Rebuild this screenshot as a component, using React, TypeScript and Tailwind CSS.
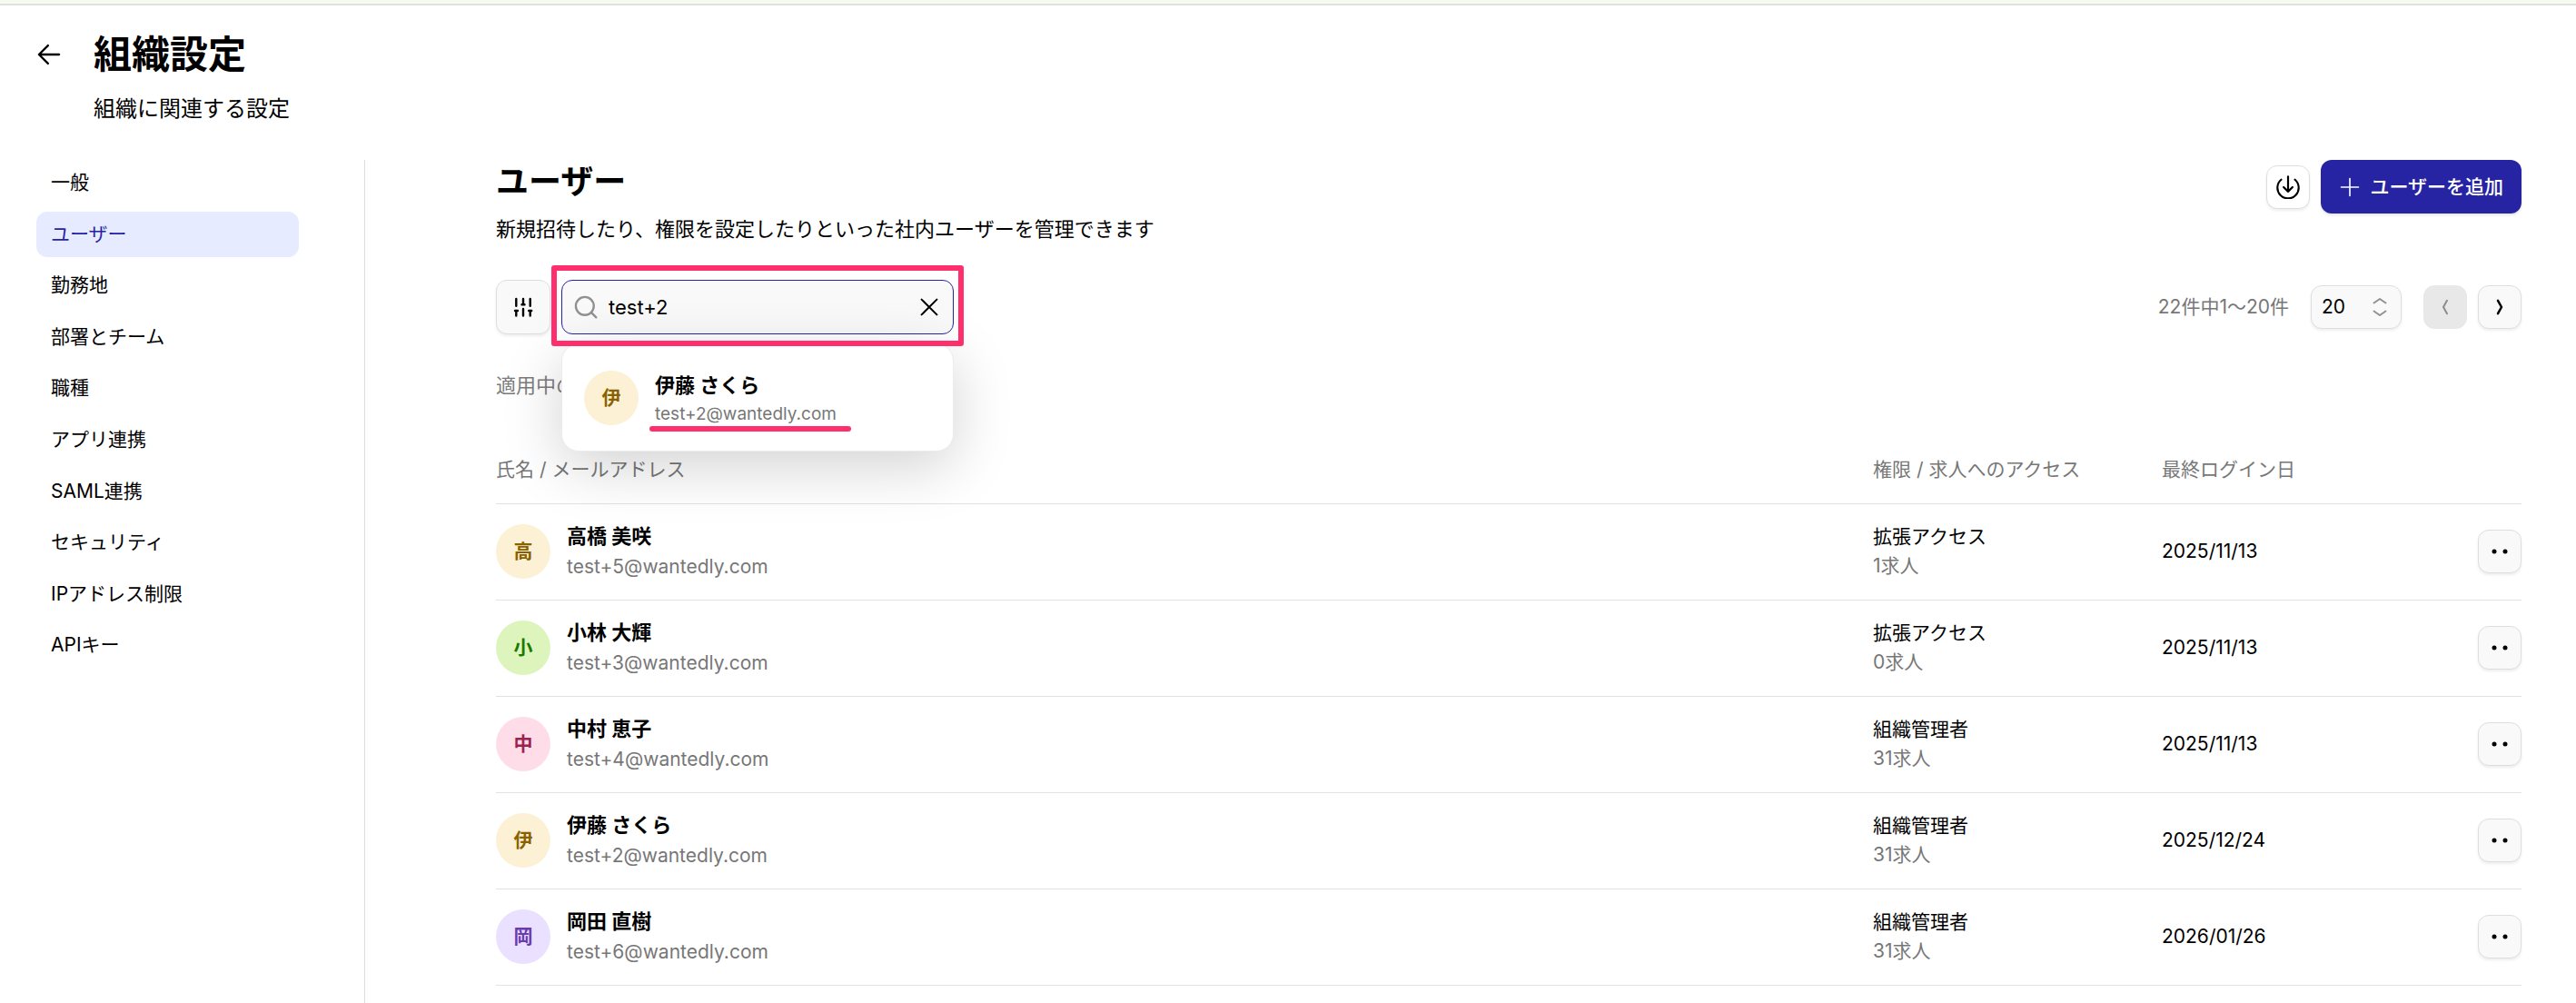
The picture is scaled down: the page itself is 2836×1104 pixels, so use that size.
import React, { useState } from "react";
import clsx from "clsx";

type User = {
  initial: string;
  name: string;
  email: string;
  color: string;
  role: string;
  jobs: string;
  lastLogin: string;
};

const NAV_ITEMS = [
  "一般",
  "ユーザー",
  "勤務地",
  "部署とチーム",
  "職種",
  "アプリ連携",
  "SAML連携",
  "セキュリティ",
  "IPアドレス制限",
  "APIキー",
];

const YELLOW = "bg-[#fcf1d4] text-[#8a6100]";
const GREEN = "bg-[#ddf5bd] text-[#1b7a00]";
const PINK = "bg-[#ffdde8] text-[#9c2350]";
const PURPLE = "bg-[#eae0ff] text-[#6a3ab0]";

const USERS: User[] = [
  { initial: "高", name: "高橋 美咲", email: "test+5@wantedly.com", color: YELLOW, role: "拡張アクセス", jobs: "1求人", lastLogin: "2025/11/13" },
  { initial: "小", name: "小林 大輝", email: "test+3@wantedly.com", color: GREEN, role: "拡張アクセス", jobs: "0求人", lastLogin: "2025/11/13" },
  { initial: "中", name: "中村 恵子", email: "test+4@wantedly.com", color: PINK, role: "組織管理者", jobs: "31求人", lastLogin: "2025/11/13" },
  { initial: "伊", name: "伊藤 さくら", email: "test+2@wantedly.com", color: YELLOW, role: "組織管理者", jobs: "31求人", lastLogin: "2025/12/24" },
  { initial: "岡", name: "岡田 直樹", email: "test+6@wantedly.com", color: PURPLE, role: "組織管理者", jobs: "31求人", lastLogin: "2026/01/26" },
];

function Icon({ className, width = 2, children }: { className: string; width?: number; children: React.ReactNode }) {
  return (
    <svg
      className={className}
      viewBox="0 0 24 24"
      fill="none"
      stroke="currentColor"
      strokeWidth={width}
      strokeLinecap="round"
      strokeLinejoin="round"
      aria-hidden="true"
    >
      {children}
    </svg>
  );
}

function Avatar({ initial, color }: { initial: string; color: string }) {
  return (
    <span className={clsx("flex size-[60px] shrink-0 items-center justify-center rounded-full text-[21px] font-bold", color)}>
      {initial}
    </span>
  );
}

function IconButton({ label, className, disabled, children }: { label: string; className?: string; disabled?: boolean; children: React.ReactNode }) {
  return (
    <button
      type="button"
      aria-label={label}
      disabled={disabled}
      className={clsx(
        "flex shrink-0 items-center justify-center border",
        disabled ? "border-[#e8e8e8] bg-[#e8e8e8] text-[#8c8c8c]" : "border-[#dedede] shadow-[0_2px_3px_rgba(0,0,0,0.07)]",
        className
      )}
    >
      {children}
    </button>
  );
}

function SearchBox() {
  const [query, setQuery] = useState("test+2");

  return (
    <div className="relative w-[432px]">
      <div className="flex h-[60px] items-center rounded-xl border border-[#2724a4] bg-[#f9f9f9] px-3">
        <Icon className="size-7 shrink-0 text-[#919191]">
          <circle cx="11" cy="11" r="8.5" />
          <path d="m17.2 17.2 4.5 4.5" />
        </Icon>
        <input
          type="text"
          aria-label="ユーザーを検索"
          value={query}
          onChange={(e) => setQuery(e.target.value)}
          className="ml-[11px] h-10 min-w-0 flex-1 bg-transparent text-[22px] text-black outline-none"
        />
        <button type="button" aria-label="クリア" onClick={() => setQuery("")} className="mr-0.5 shrink-0">
          <Icon className="size-6">
            <path d="M3.6 3.6 20.4 20.4M20.4 3.6 3.6 20.4" />
          </Icon>
        </button>
      </div>

      {/* Suggestion */}
      <div className="absolute inset-x-0 top-[70px] z-10 flex h-[119px] items-center rounded-[19px] border border-[#ececec] bg-white px-6 shadow-[0_16px_64px_rgba(0,0,0,0.18)]">
        <Avatar initial="伊" color={YELLOW} />
        <div className="relative ml-[18px] pt-1">
          <p className="text-[22px] leading-8 font-bold">伊藤 さくら</p>
          <p className="text-[19px] leading-8 text-[#777777]">test+2@wantedly.com</p>
          <span className="absolute -right-4 -bottom-[3px] -left-[6px] h-[6px] rounded-full bg-[#ff2e6c]" />
        </div>
      </div>

      {/* Highlight around the field */}
      <div className="pointer-events-none absolute -inset-x-[11px] -top-4 -bottom-[13px] z-20 rounded-[3px] border-6 border-[#ff2e6c]" />
    </div>
  );
}

export default function App() {
  const [active, setActive] = useState("ユーザー");

  return (
    <div className="flex min-h-screen flex-col bg-white font-[Inter,'Noto_Sans_CJK_JP',sans-serif] text-black">
      <div className="h-[6px] border-b-2 border-[#dfe2d8] bg-[#f7faf0]" />

      <header className="flex gap-[35px] pt-6 pl-10">
        <a href="#" aria-label="戻る" className="flex h-[60px] w-7 items-center">
          <Icon className="size-7">
            <path d="M21.5 12H2.5M11 3.5 2.5 12l8.5 8.5" />
          </Icon>
        </a>
        <div>
          <h1 className="text-[42px] leading-[60px] font-bold">組織設定</h1>
          <p className="mt-3 text-2xl leading-9">組織に関連する設定</p>
        </div>
      </header>

      <div className="mt-[38px] flex flex-1">
        <nav className="w-[402px] shrink-0 border-r border-[#dcdcdc] pr-[72px] pl-10">
          <ul className="flex h-[559px] flex-col justify-between">
            {NAV_ITEMS.map((item) => (
              <li key={item}>
                <a
                  href="#"
                  onClick={() => setActive(item)}
                  className={clsx(
                    "flex h-[50px] items-center rounded-xl px-4 text-[21px]",
                    item === active && "bg-[#e7ebff] text-[#2724a4]"
                  )}
                >
                  {item}
                </a>
              </li>
            ))}
          </ul>
        </nav>

        <main className="min-w-0 flex-1 pr-[60px] pl-36">
          <div className="flex items-start justify-between">
            <div>
              <h2 className="text-4xl leading-[48px] font-bold">ユーザー</h2>
              <p className="mt-2.5 text-[22px] leading-9">新規招待したり、権限を設定したりといった社内ユーザーを管理できます</p>
            </div>
            <div className="flex items-center gap-3">
              <IconButton label="ダウンロード" className="size-12 rounded-xl bg-white">
                <Icon className="size-[26px]">
                  <path d="M12 1.2v15.3M7.5 12l4.5 4.5 4.5-4.5" />
                  <path d="M5 4.4a10.8 10.8 0 1 0 14 0" />
                </Icon>
              </IconButton>
              <button type="button" className="flex h-[59px] items-center gap-2.5 rounded-xl bg-[#2724a4] px-5 text-[21px] leading-8 font-medium text-white shadow-[0_2px_3px_rgba(0,0,0,0.1)]">
                <Icon className="size-6" width={1.6}>
                  <path d="M12 2.5v19M2.5 12h19" />
                </Icon>
                ユーザーを追加
              </button>
            </div>
          </div>

          <div className="mt-[38px] flex items-center">
            <IconButton label="フィルター" className="mr-3 size-[60px] rounded-xl bg-[#f9f9f9]">
              <Icon className="size-6" width={2.4}>
                <path d="M4.3 2.9v7.8M3 16h3M4.3 16v5.5M12 2.9V9M10.5 9.3h3M12 14v7.5M19.7 2.9v7.8M18.2 16h3M19.7 16v5.5" />
              </Icon>
            </IconButton>
            <SearchBox />
            <span className="ml-auto text-[21px] text-[#777777]">22件中1〜20件</span>
            <div className="relative ml-6 flex items-center">
              <select
                aria-label="表示件数"
                defaultValue="20"
                className="h-12 w-[100px] appearance-none rounded-xl border border-[#dedede] bg-[#f9f9f9] px-[11px] text-[21px] shadow-[0_2px_3px_rgba(0,0,0,0.07)]"
              >
                <option>20</option>
                <option>50</option>
                <option>80</option>
              </select>
              <Icon className="pointer-events-none absolute right-3 size-6 text-[#919191]">
                <path d="m5.5 7.5 6.5-4.5 6.5 4.5M5.5 16.5l6.5 4.5 6.5-4.5" />
              </Icon>
            </div>
            <IconButton label="前へ" disabled className="ml-6 size-12 rounded-xl">
              <Icon className="size-6">
                <path d="m14 4.8-4 7.2 4 7.2" />
              </Icon>
            </IconButton>
            <IconButton label="次へ" className="ml-3 size-12 rounded-xl bg-[#f9f9f9]">
              <Icon className="size-6" width={2.5}>
                <path d="m10 4.8 4 7.2-4 7.2" />
              </Icon>
            </IconButton>
          </div>

          <p className="mt-[38px] text-[22px] leading-9 text-[#7c7c7c]">適用中の</p>

          <table className="mt-[38px] w-full table-fixed border-collapse text-left text-[21px]">
            <thead>
              <tr className="h-[74px] border-b border-[#e2e2e2] text-[#777777]">
                <th className="font-normal">氏名 / メールアドレス</th>
                <th className="w-[318px] font-normal">権限 / 求人へのアクセス</th>
                <th className="w-[276px] font-normal">最終ログイン日</th>
                <th aria-label="操作" className="w-[120px]" />
              </tr>
            </thead>
            <tbody>
              {USERS.map((user) => (
                <tr key={user.email} className="h-[106px] border-b border-[#e2e2e2]">
                  <td className="p-0">
                    <div className="flex items-center gap-[18px]">
                      <Avatar initial={user.initial} color={user.color} />
                      <div>
                        <p className="text-[22px] leading-[34px] font-bold">{user.name}</p>
                        <p className="leading-[34px] text-[#777777]">{user.email}</p>
                      </div>
                    </div>
                  </td>
                  <td className="p-0">
                    <p className="leading-8">{user.role}</p>
                    <p className="leading-8 text-[#777777]">{user.jobs}</p>
                  </td>
                  <td className="p-0">{user.lastLogin}</td>
                  <td className="p-0">
                    <IconButton label={`${user.name}のメニュー`} className="ml-auto size-12 rounded-xl bg-[#f9f9f9]">
                      <Icon className="size-6">
                        <circle cx="6" cy="12" r="2.5" fill="currentColor" stroke="none" />
                        <circle cx="18" cy="12" r="2.5" fill="currentColor" stroke="none" />
                      </Icon>
                    </IconButton>
                  </td>
                </tr>
              ))}
            </tbody>
          </table>
        </main>
      </div>
    </div>
  );
}
